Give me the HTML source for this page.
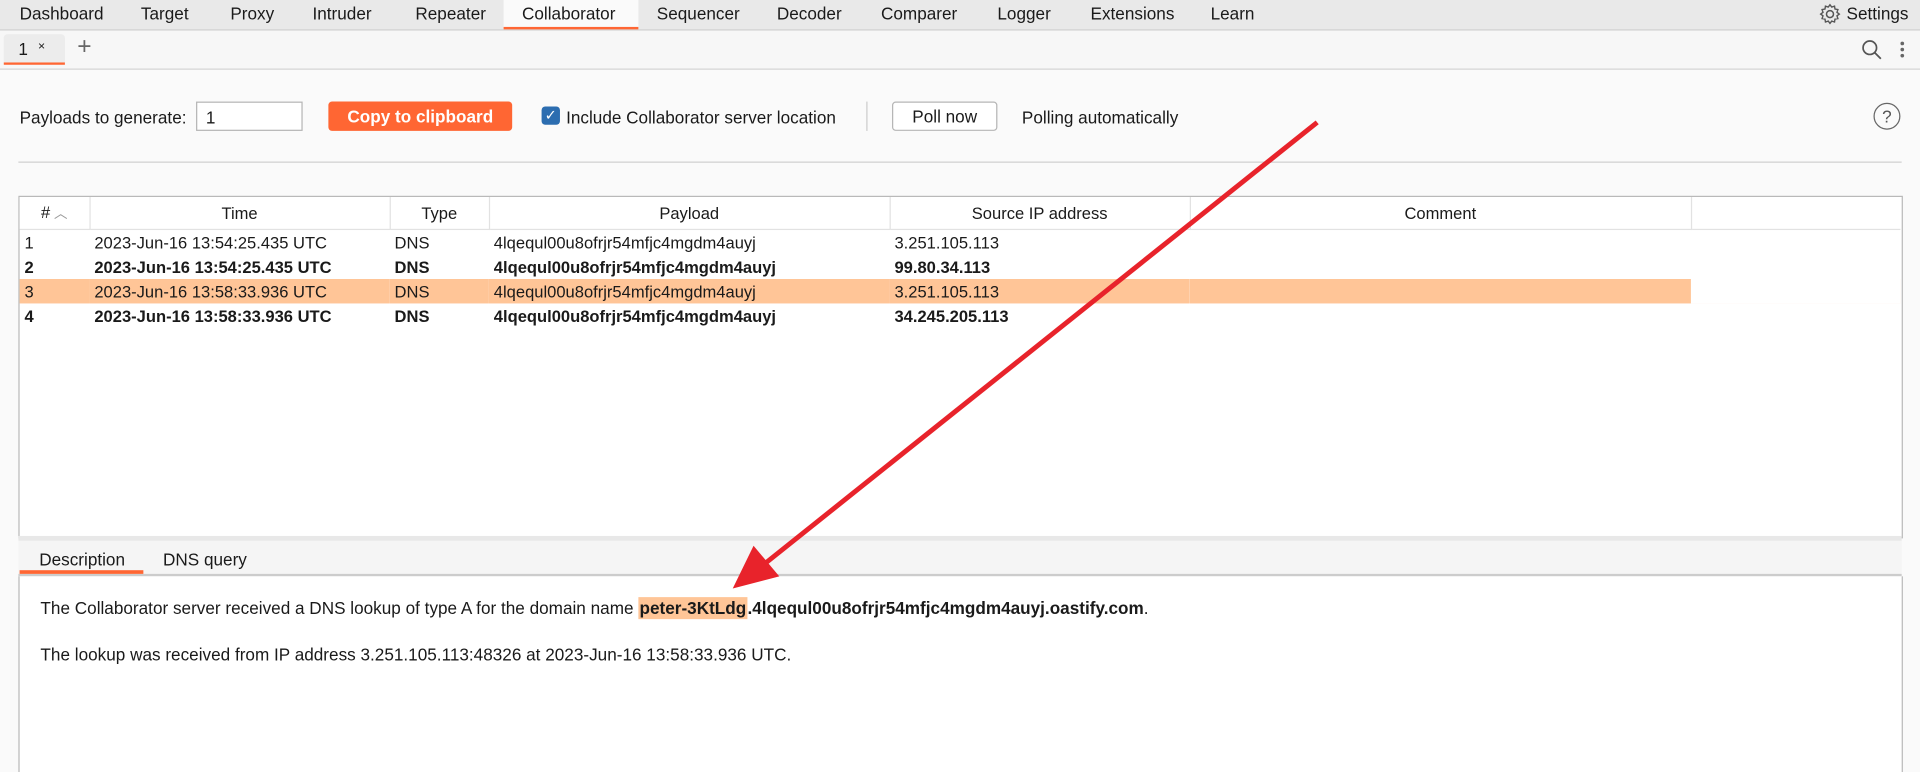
<!DOCTYPE html>
<html><head><meta charset="utf-8"><style>
html,body{margin:0;padding:0;width:1920px;height:766px;overflow:hidden;background:#fafafa}
#w{position:absolute;left:0;top:0;width:1567px;height:626px;transform:scale(1.2253,1.2236);transform-origin:0 0;font-family:"Liberation Sans",sans-serif;font-size:14px;color:#1a1a1a}
.a{position:absolute;white-space:nowrap}
.top{position:absolute;left:0;top:0;width:1567px;height:24px;background:#e9e9e9;border-bottom:1px solid #cfcfcf}
.t{position:absolute;top:3px}
.row2{position:absolute;left:0;top:25px;width:1567px;height:31px;background:#f7f7f7;border-bottom:1px solid #d4d4d4}
table{border-collapse:collapse;position:absolute;left:16px;top:161px;font-size:13.5px;table-layout:fixed;width:1535px}
td{height:20px;padding:0 4px;white-space:nowrap;overflow:hidden}
th{height:26px;font-weight:normal;border-right:1px solid #e2e2e2;border-bottom:1px solid #e2e2e2;background:#fff;padding:0}
.b td{font-weight:bold}
</style></head><body><div id="w">
<div class="top">
<div class="a t" style="left:16px">Dashboard</div>
<div class="a t" style="left:115px">Target</div>
<div class="a t" style="left:188px">Proxy</div>
<div class="a t" style="left:255px">Intruder</div>
<div class="a t" style="left:339px">Repeater</div>
<div class="a" style="left:411px;top:0;width:110px;height:24px;background:#fafafa;border-bottom:2px solid #ff6633;box-sizing:border-box"></div>
<div class="a t" style="left:426px">Collaborator</div>
<div class="a t" style="left:536px">Sequencer</div>
<div class="a t" style="left:634px">Decoder</div>
<div class="a t" style="left:719px">Comparer</div>
<div class="a t" style="left:814px">Logger</div>
<div class="a t" style="left:890px">Extensions</div>
<div class="a t" style="left:988px">Learn</div>
<svg class="a" style="left:1484px;top:2px" width="19" height="19" viewBox="0 0 20 20"><circle cx="10" cy="10" r="3" fill="none" stroke="#555" stroke-width="1.3"/><path d="M10 2l1.5 2 2.4-.8.4 2.5 2.5.4-.8 2.4 2 1.5-2 1.5.8 2.4-2.5.4-.4 2.5-2.4-.8L10 18l-1.5-2-2.4.8-.4-2.5-2.5-.4.8-2.4L2 10l2-1.5-.8-2.4 2.5-.4.4-2.5 2.4.8z" fill="none" stroke="#555" stroke-width="1.2"/></svg>
<div class="a t" style="left:1507px">Settings</div>
</div>
<div class="row2">
<div class="a" style="left:3px;top:3px;width:50px;height:25px;background:#ececec;border-radius:3px 3px 0 0;border-bottom:2px solid #ff6633;box-sizing:border-box"></div>
<div class="a" style="left:15px;top:7px">1</div>
<div class="a" style="left:31px;top:8px;font-size:10px">×</div>
<div class="a" style="left:63px;top:2px;font-size:20px;color:#666">+</div>
<svg class="a" style="left:1519px;top:7px" width="18" height="18"><circle cx="7" cy="7" r="5.5" fill="none" stroke="#555" stroke-width="1.4"/><path d="M11 11l5 5" stroke="#555" stroke-width="1.5"/></svg>
<div class="a" style="left:1551px;top:9px;width:3px;height:3px;background:#666;border-radius:2px;box-shadow:0 5px #666,0 10px #666"></div>
</div>
<div class="a" style="left:16px;top:88px">Payloads to generate:</div>
<div class="a" style="left:160px;top:83px;width:85px;height:22px;background:#fff;border:1px solid #b5b5b5"></div>
<div class="a" style="left:168px;top:88px">1</div>
<div class="a" style="left:268px;top:83px;width:150px;height:24px;background:#ff6633;border-radius:3px;color:#fff;font-weight:bold;text-align:center;line-height:24px">Copy to clipboard</div>
<div class="a" style="left:442px;top:87px;width:15px;height:15px;background:#2c6db0;border-radius:3px;color:#fff;font-size:12px;text-align:center;line-height:15px">✓</div>
<div class="a" style="left:462px;top:88px">Include Collaborator server location</div>
<div class="a" style="left:707px;top:83px;width:1px;height:24px;background:#ccc"></div>
<div class="a" style="left:728px;top:83px;width:84px;height:22px;background:#fff;border:1px solid #b5b5b5;border-radius:3px;text-align:center;line-height:22px">Poll now</div>
<div class="a" style="left:834px;top:88px">Polling automatically</div>
<div class="a" style="left:1529px;top:84px;width:20px;height:20px;border:1.5px solid #666;border-radius:50%;text-align:center;line-height:20px;color:#555;font-size:14px">?</div>
<div class="a" style="left:15px;top:132px;width:1537px;height:1px;background:#d0d0d0"></div>
<div class="a" style="left:15px;top:160px;width:1536px;height:278px;background:#fff;border:1px solid #b9b9b9"></div>
<table>
<colgroup><col style="width:57px"><col style="width:245px"><col style="width:81px"><col style="width:327px"><col style="width:245px"><col style="width:409px"><col style="width:171px"></colgroup>
<tr><th style="text-align:center">#<span style="color:#999;font-size:11px"> ︿</span></th><th>Time</th><th>Type</th><th>Payload</th><th>Source IP address</th><th>Comment</th><th style="border-right:none"></th></tr>
<tr><td>1</td><td>2023-Jun-16 13:54:25.435 UTC</td><td>DNS</td><td>4lqequl00u8ofrjr54mfjc4mgdm4auyj</td><td>3.251.105.113</td><td></td><td></td></tr>
<tr class="b"><td>2</td><td>2023-Jun-16 13:54:25.435 UTC</td><td>DNS</td><td>4lqequl00u8ofrjr54mfjc4mgdm4auyj</td><td>99.80.34.113</td><td></td><td></td></tr>
<tr style="background:#ffc597"><td>3</td><td>2023-Jun-16 13:58:33.936 UTC</td><td>DNS</td><td>4lqequl00u8ofrjr54mfjc4mgdm4auyj</td><td>3.251.105.113</td><td></td><td style="background:#fff"></td></tr>
<tr class="b"><td>4</td><td>2023-Jun-16 13:58:33.936 UTC</td><td>DNS</td><td>4lqequl00u8ofrjr54mfjc4mgdm4auyj</td><td>34.245.205.113</td><td></td><td></td></tr>
</table>
<div class="a" style="left:15px;top:438px;width:1537px;height:4px;background:#e8e8e8"></div>
<div class="a" style="left:15px;top:442px;width:1537px;height:27px;background:#f5f5f5;border-bottom:2px solid #ccc"></div>
<div class="a" style="left:16px;top:466px;width:101px;height:3px;background:#ff6633"></div>
<div class="a" style="left:32px;top:449px">Description</div>
<div class="a" style="left:133px;top:449px">DNS query</div>
<div class="a" style="left:15px;top:471px;width:1536px;height:160px;background:#fff;border-left:1px solid #b9b9b9;border-right:1px solid #b9b9b9"></div>
<div class="a" style="left:33px;top:489px">The Collaborator server received a DNS lookup of type A for the domain name <b style="background:#ffc597;padding:1px 1px">peter-3KtLdg</b><b>.4lqequl00u8ofrjr54mfjc4mgdm4auyj.oastify.com</b>.</div>
<div class="a" style="left:33px;top:527px">The lookup was received from IP address 3.251.105.113:48326 at 2023-Jun-16 13:58:33.936 UTC.</div>
<svg class="a" style="left:0;top:0" width="1567" height="626"><line x1="1075" y1="100" x2="625" y2="460" stroke="#e8232b" stroke-width="4"/><polygon points="598,481 615,446 636,471" fill="#e8232b"/></svg>
</div></body></html>
